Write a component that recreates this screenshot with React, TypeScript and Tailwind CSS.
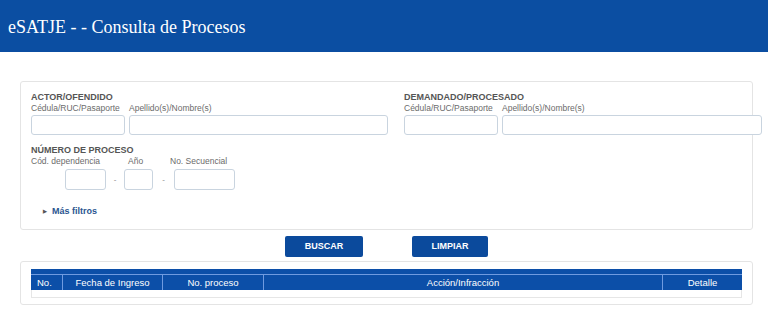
import React from "react";

const labelCls = "text-[8.5px] leading-[10px] text-[#6b6b6b] whitespace-nowrap";
const headingCls = "text-[9px] leading-[12px] font-bold text-[#555]";
const inputCls = "h-[20px] rounded-[3px] border border-[#c9d4df] bg-white";

const PartyBlock: React.FC<{ title: string; wide: string }> = ({ title, wide }) => (
  <div>
    <div className={headingCls}>{title}</div>
    <div className="flex">
      <span className={`${labelCls} w-[98px]`}>Cédula/RUC/Pasaporte</span>
      <span className={labelCls}>Apellido(s)/Nombre(s)</span>
    </div>
    <div className="mt-[2px] flex gap-[4px]">
      <div className={`${inputCls} w-[94px]`} />
      <div className={`${inputCls} ${wide}`} />
    </div>
  </div>
);

const columns = [
  { label: "No.", align: "text-left pl-[6px]" },
  { label: "Fecha de Ingreso", align: "text-center" },
  { label: "No. proceso", align: "text-center" },
  { label: "Acción/Infracción", align: "text-center" },
  { label: "Detalle", align: "text-center" },
];

export default function App() {
  return (
    <div className="min-h-[315px] bg-white font-['Liberation_Sans',Arial,sans-serif]">
      <header className="flex h-[52px] items-center bg-[#0b4ea2] px-[8px] pt-[3px]">
        <h1 className="font-['Liberation_Serif','Times_New_Roman',serif] text-[18px] text-white">
          eSATJE - - Consulta de Procesos
        </h1>
      </header>

      <div className="ml-[20px] mr-[15px] mt-[29px] h-[149px] rounded-[3px] border border-[#e4e4e4] px-[10px] pt-[9px]">
        <div className="flex">
          <div className="w-[373px] shrink-0">
            <PartyBlock title="ACTOR/OFENDIDO" wide="w-[259px]" />
          </div>
          <div className="shrink-0">
            <PartyBlock title="DEMANDADO/PROCESADO" wide="w-[260px]" />
          </div>
        </div>

        <div className="mt-[9px]">
          <div className={headingCls}>NÚMERO DE PROCESO</div>
          <div className="flex">
            <span className={`${labelCls} w-[97px]`}>Cód. dependencia</span>
            <span className={`${labelCls} w-[42px]`}>Año</span>
            <span className={labelCls}>No. Secuencial</span>
          </div>
          <div className="ml-[34px] mt-[3px] flex items-center">
            <div className={`${inputCls} h-[21px] w-[41px]`} />
            <span className="w-[18px] text-center text-[8px] text-[#888]">-</span>
            <div className={`${inputCls} h-[21px] w-[29px]`} />
            <span className="w-[21px] text-center text-[8px] text-[#888]">-</span>
            <div className={`${inputCls} h-[21px] w-[61px]`} />
          </div>
        </div>

        <div className="ml-[12px] mt-[15px] flex items-center gap-[5px] text-[9px] font-bold text-[#2a5590]">
          <span className="text-[5px] text-[#555]">▶</span>
          <span>Más filtros</span>
        </div>
      </div>

      <div className="ml-[20px] mr-[15px] mt-[6px] flex justify-center gap-[49px]">
        <button className="h-[21px] w-[78px] rounded-[2px] bg-[#0b4a9c] text-[9px] font-bold text-white">
          BUSCAR
        </button>
        <button className="h-[21px] w-[76px] rounded-[2px] bg-[#0b4a9c] text-[9px] font-bold text-white">
          LIMPIAR
        </button>
      </div>

      <div className="ml-[20px] mr-[15px] mt-[4px] h-[44px] rounded-[3px] border border-[#e4e4e4] px-[10px] pt-[7px]">
        <div className="h-[5px] bg-[#0c4fa8]" />
        <div className="grid grid-cols-[31px_100px_101px_1fr_80px] border-t border-[#6f9be0] bg-[#0c4fa8]">
          {columns.map((col, i) => (
            <div
              key={col.label}
              className={`h-[15px] text-[9.5px] leading-[15px] text-white ${col.align} ${
                i > 0 ? "border-l border-[#6f9be0]" : ""
              }`}
            >
              {col.label}
            </div>
          ))}
        </div>
        <div className="h-[8px] border-x border-b border-[#e6e6e6]" />
      </div>
    </div>
  );
}
